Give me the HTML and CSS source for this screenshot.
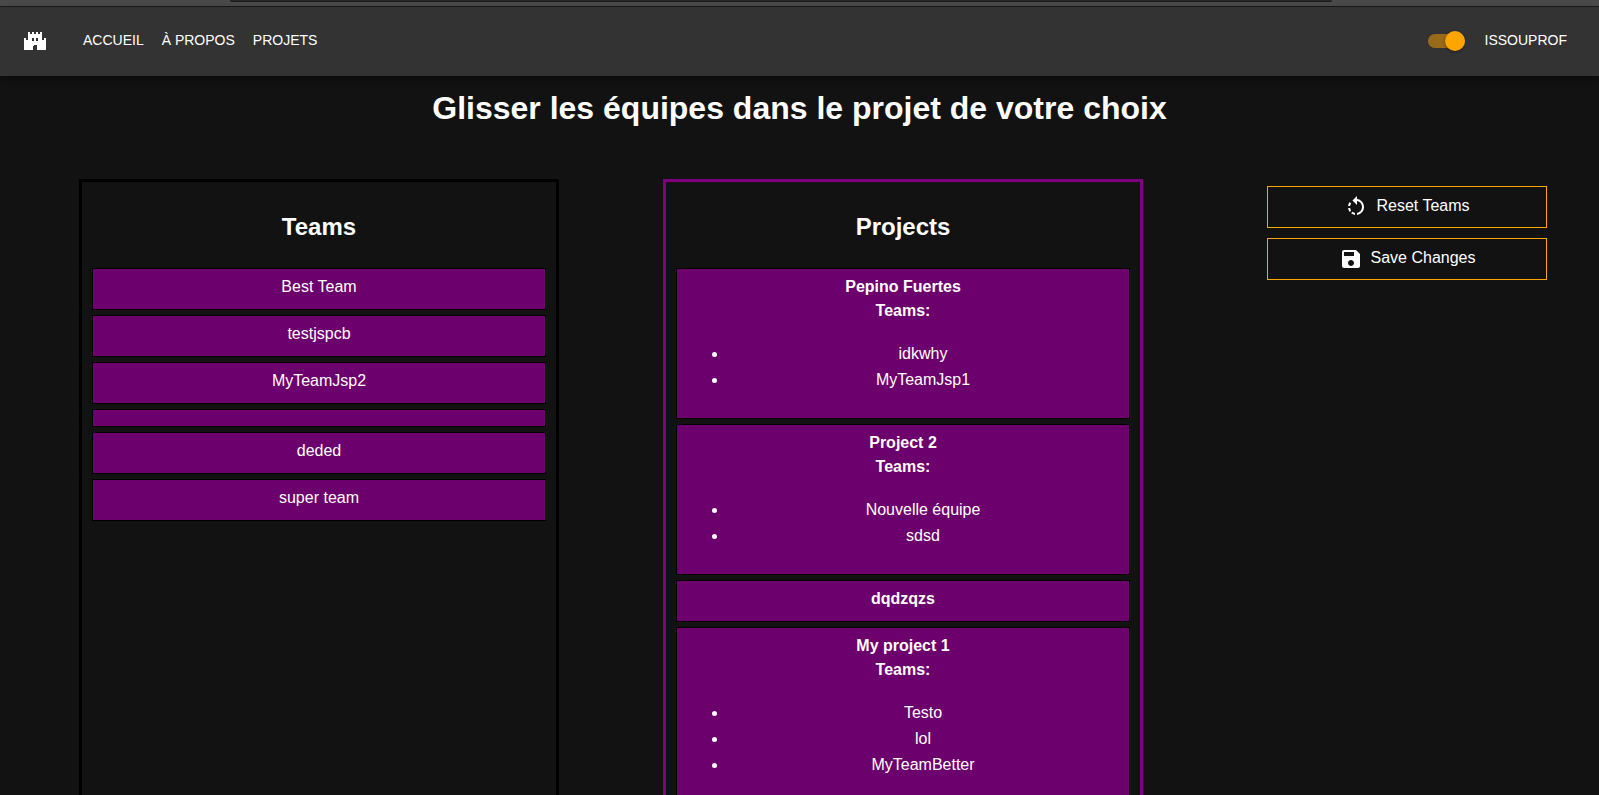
FILE: index.html
```html
<!DOCTYPE html>
<html lang="fr">
<head>
<meta charset="utf-8">
<title>Projets</title>
<link rel="stylesheet" href="styles.css">
</head>
<body>
<div class="window-edge"><div class="address-edge"></div></div>
<header class="topbar">
  <a class="logo" href="#" aria-label="Accueil">
    <svg viewBox="0 0 22 18" width="22" height="18" shape-rendering="crispEdges"><path fill="#fff" fill-rule="evenodd" d="M4 0h2v2h2V0h2v2h2V0h2v2h2V0h2v8h2V6h2v12h-9v-4l-1-1h-2l-1 1v4H0V6h2v2h2zM8 6v3h2V6zM12 6v3h2V6z"/></svg>
  </a>
  <nav class="nav">
    <a href="#">ACCUEIL</a>
    <a href="#">À PROPOS</a>
    <a href="#">PROJETS</a>
  </nav>
  <input class="switch" type="checkbox" role="switch" aria-label="Thème sombre" checked>
  <a class="user" href="#">ISSOUPROF</a>
</header>
<main>
  <h1>Glisser les équipes dans le projet de votre choix</h1>
  <div class="board">
    <section class="column teams">
      <h2>Teams</h2>
      <div class="card">Best Team</div>
      <div class="card">testjspcb</div>
      <div class="card">MyTeamJsp2</div>
      <div class="card"></div>
      <div class="card">deded</div>
      <div class="card">super team</div>
    </section>
    <section class="column projects">
      <h2>Projects</h2>
      <article class="card">
        <h3>Pepino Fuertes</h3>
        <h4>Teams:</h4>
        <ul><li>idkwhy</li><li>MyTeamJsp1</li></ul>
      </article>
      <article class="card">
        <h3>Project 2</h3>
        <h4>Teams:</h4>
        <ul><li>Nouvelle équipe</li><li>sdsd</li></ul>
      </article>
      <article class="card"><h3>dqdzqzs</h3></article>
      <article class="card">
        <h3>My project 1</h3>
        <h4>Teams:</h4>
        <ul><li>Testo</li><li>lol</li><li>MyTeamBetter</li></ul>
      </article>
    </section>
    <div class="actions">
      <button type="button"><svg viewBox="0 0 24 24" width="24" height="24"><path fill="currentColor" d="M7.11 8.53L5.7 7.11C4.8 8.27 4.24 9.61 4.07 11h2.02c.14-.87.49-1.72 1.02-2.47zM6.09 13H4.07c.17 1.39.72 2.73 1.62 3.89l1.41-1.42c-.52-.75-.87-1.59-1.01-2.47zM7.1 18.32c1.16.9 2.51 1.44 3.9 1.61V17.9c-.87-.15-1.71-.49-2.46-1.03L7.1 18.32zM13 4.07V1L8.45 5.55 13 10V6.09c2.84.48 5 2.94 5 5.91s-2.16 5.43-5 5.91v2.02c3.95-.49 7-3.85 7-7.93s-3.05-7.44-7-7.93z"/></svg><span>Reset Teams</span></button>
      <button type="button"><svg viewBox="0 0 24 24" width="24" height="24"><path fill="currentColor" d="M17 3H5c-1.11 0-2 .9-2 2v14c0 1.1.89 2 2 2h14c1.1 0 2-.9 2-2V7l-4-4zm-5 16c-1.66 0-3-1.34-3-3s1.34-3 3-3 3 1.34 3 3-1.34 3-3 3zm3-10H5V5h10v4z"/></svg><span>Save Changes</span></button>
    </div>
  </div>
</main>
</body>
</html>
```
FILE: styles.css
```css
* { box-sizing: border-box; }
html { height: 100%; }
body {
  margin: 0;
  height: 100vh;
  display: flex;
  flex-direction: column;
  overflow: hidden;
  background: #121212;
  color: #fff;
  font: 16px/24px "Liberation Sans", Arial, sans-serif;
}
.window-edge {
  flex: none;
  height: 7px;
  background: #4a4a4a;
  border-bottom: 1px solid #1c1c1c;
}
.address-edge {
  height: 2px;
  margin: 0 267px 0 230px;
  background: #282828;
  border-bottom: 1px solid #1c1c1c;
  border-radius: 0 0 3px 3px;
}
.topbar {
  flex: none;
  display: flex;
  align-items: center;
  height: 69px;
  padding: 0 32px 2px 24px;
  background: #333;
  box-shadow: 0 2px 4px -1px rgba(0,0,0,.2), 0 4px 5px rgba(0,0,0,.14), 0 1px 10px rgba(0,0,0,.12);
  font-size: 14px;
}
.topbar a { color: #fff; text-decoration: none; }
.logo { display: flex; }
.nav {
  display: flex;
  gap: 18px;
  margin-left: 37px;
  margin-right: auto;
}
.nav, .user { padding-bottom: 2px; }
.switch {
  appearance: none;
  display: flex;
  align-items: center;
  justify-content: flex-end;
  width: 37px;
  height: 14px;
  margin: 0 20px 0 0;
  border-radius: 7px;
  background: #996a19;
}
.switch::before {
  content: "";
  width: 20px;
  height: 20px;
  flex: none;
  border-radius: 50%;
  background: orange;
  box-shadow: 0 1px 3px rgba(0,0,0,.4);
}
main {
  flex: 1;
  display: flex;
  flex-direction: column;
  min-height: 0;
}
h1, h2, h3, h4 { margin: 0; }
h1 {
  padding: 13px 0 52px;
  font-size: 32px;
  line-height: 38px;
  text-align: center;
}
h2 {
  padding: 20px 0 26px;
  font-size: 24px;
  line-height: 30px;
}
h3, h4 { font-size: 16px; }
.board {
  flex: 1 0 auto;
  display: flex;
  align-items: stretch;
  padding: 0 52px 0 79px;
}
.column {
  flex: 0 1 480px;
  padding: 10px;
  text-align: center;
}
.teams { border: 3px solid #000; margin-right: 104px; }
.projects { border: 3px solid #800080; }
.card {
  margin-bottom: 5px;
  padding: 6px 8px 10px;
  border: 1px solid #000;
  background: #6c006c;
}
.card ul { margin: 18px 0 15px; padding: 0 3px 0 43px; }
.card li { line-height: 26px; }
.actions {
  display: flex;
  flex-direction: column;
  gap: 10px;
  width: 280px;
  margin-left: auto;
  padding-top: 7px;
}
button {
  display: flex;
  align-items: center;
  justify-content: center;
  gap: 8px;
  height: 42px;
  padding: 0;
  border: 1px solid orange;
  background: transparent;
  color: #fff;
  font: inherit;
}
button span { padding-bottom: 2px; }
```
